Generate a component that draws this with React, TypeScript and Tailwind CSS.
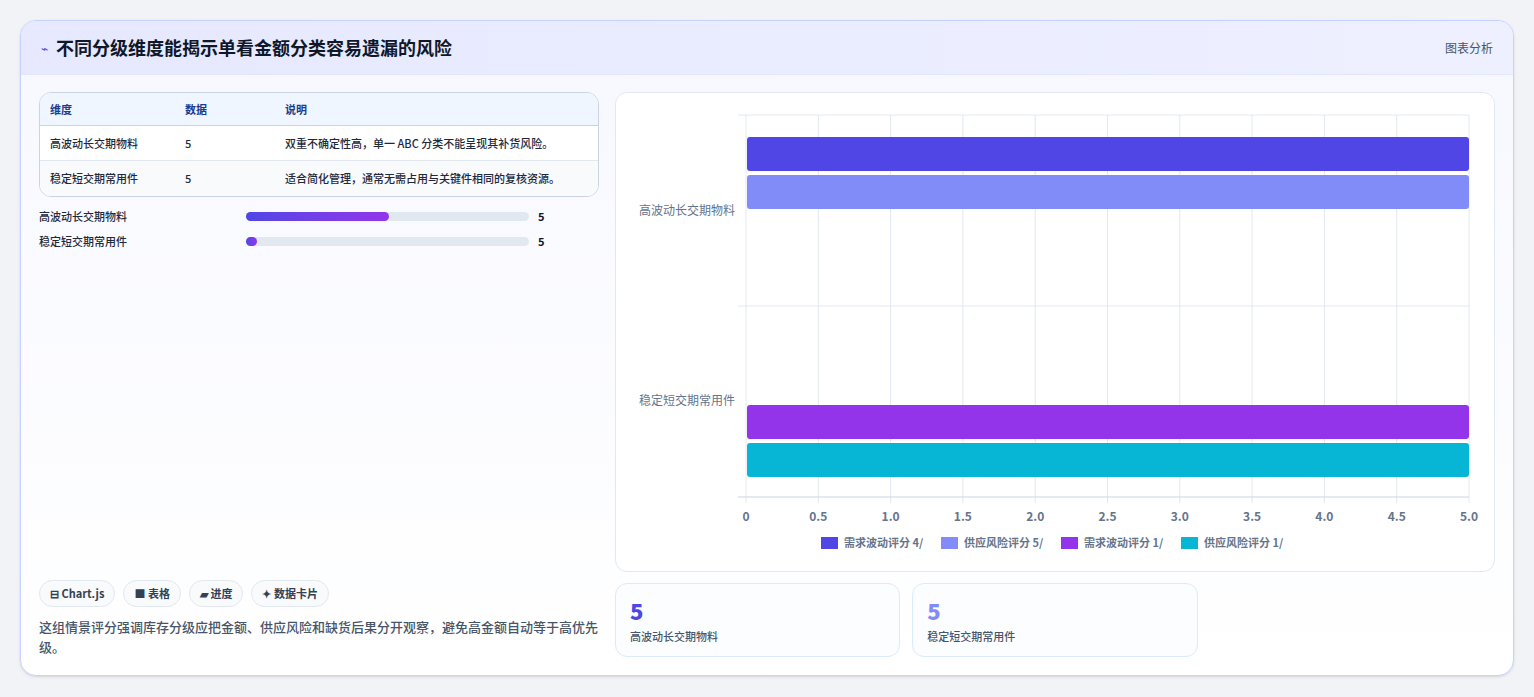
import React from "react";

const F = { fontFamily: '"Noto Sans CJK SC","Noto Sans",sans-serif' };

function Chart() {
  const x0 = 130, x1 = 853, y0 = 22, y1 = 404;
  const sx = (v: number) => x0 + ((x1 - x0) * v) / 5;
  const ticks = [0, 0.5, 1, 1.5, 2, 2.5, 3, 3.5, 4, 4.5, 5];
  const bars = [
    { y: 44, c: "#4f46e5" },
    { y: 82, c: "#818cf8" },
    { y: 312, c: "#9333ea" },
    { y: 350, c: "#06b6d4" },
  ];
  const legend = [
    { c: "#4f46e5", t: "需求波动评分 4/" },
    { c: "#818cf8", t: "供应风险评分 5/" },
    { c: "#9333ea", t: "需求波动评分 1/" },
    { c: "#06b6d4", t: "供应风险评分 1/" },
  ];
  let lx = 205;
  return (
    <svg width="878" height="479" style={F}>
      {ticks.map((t) => (
        <line key={t} x1={sx(t)} x2={sx(t)} y1={y0} y2={y1 + 6} stroke="#e2e8f0" />
      ))}
      {[y0, 213, y1].map((y) => (
        <line key={y} x1={x0 - 8} x2={x1} y1={y} y2={y} stroke={y === y1 ? "#cbd5e1" : "#e2e8f0"} />
      ))}
      {bars.map((b) => (
        <rect key={b.y} x={x0 + 1} y={b.y} width={x1 - x0 - 1} height={34} rx={3} fill={b.c} />
      ))}
      <text x={119} y={122} textAnchor="end" fontSize="12" fill="#64748b">高波动长交期物料</text>
      <text x={119} y={312} textAnchor="end" fontSize="12" fill="#64748b">稳定短交期常用件</text>
      {ticks.map((t) => (
        <text key={t} x={sx(t)} y={428} textAnchor="middle" fontSize="12" fontWeight="700" fill="#64748b">
          {t === 0 ? "0" : t.toFixed(1)}
        </text>
      ))}
      {legend.map((l) => {
        const x = lx;
        lx += 120;
        return (
          <g key={l.t}>
            <rect x={x} y={444} width={17} height={12} fill={l.c} />
            <text x={x + 23} y={454} fontSize="11" fontWeight="700" fill="#64748b">{l.t}</text>
          </g>
        );
      })}
    </svg>
  );
}

export default function App() {
  return (
    <div className="min-h-[697px] bg-[#f1f3f7] pt-5 px-5" style={F}>
      <div className="w-[1494px] h-[656px] rounded-2xl border border-[#c7d2fe] bg-gradient-to-b from-[#f7f8ff] to-white shadow-sm overflow-hidden flex flex-col">
        <div className="h-[55px] flex items-center justify-between px-5 bg-gradient-to-r from-[#e6e9ff] to-[#eef0ff] border-b border-[#e0e7ff]">
          <div className="flex items-center gap-2">
            <span className="text-[#4f46e5] text-xs">⌁</span>
            <span className="text-[18px] font-bold text-[#0f172a]">不同分级维度能揭示单看金额分类容易遗漏的风险</span>
          </div>
          <span className="text-[12px] text-[#475569]">图表分析</span>
        </div>
        <div className="flex-1 flex gap-4 px-[18px] pt-[17px] pb-[18px]">
          <div className="w-[562px] flex flex-col">
            <div className="rounded-xl border border-[#cbd5e1] overflow-hidden bg-white text-[11px]">
              <div className="flex h-[33px] items-center bg-[#eff6ff] border-b border-[#cbd5e1] font-bold text-[#1e3a8a]">
                <div className="w-[145px] pl-[10px]">维度</div>
                <div className="w-[100px]">数据</div>
                <div>说明</div>
              </div>
              {[
                ["高波动长交期物料", "双重不确定性高，单一 ABC 分类不能呈现其补货风险。"],
                ["稳定短交期常用件", "适合简化管理，通常无需占用与关键件相同的复核资源。"],
              ].map((r, i) => (
                <div key={i} className={`flex h-[35px] items-center text-[#1e293b] font-medium ${i === 0 ? "border-b border-[#e2e8f0]" : "bg-[#f8fafc]"}`}>
                  <div className="w-[145px] pl-[10px]">{r[0]}</div>
                  <div className="w-[100px]">5</div>
                  <div>{r[1]}</div>
                </div>
              ))}
            </div>
            <div className="mt-3 flex flex-col gap-[11px] text-[11px] font-medium text-[#1e293b]">
              {[
                ["高波动长交期物料", "w-[143px]"],
                ["稳定短交期常用件", "w-[11px]"],
              ].map((r) => (
                <div key={r[0]} className="flex items-center h-[14px]">
                  <div className="w-[207px]">{r[0]}</div>
                  <div className="w-[283px] h-[9px] rounded-full bg-[#e2e8f0]">
                    <div className={`${r[1]} h-[9px] rounded-full bg-gradient-to-r from-[#4f46e5] to-[#9333ea]`} />
                  </div>
                  <div className="ml-[9px] font-bold text-[#0f172a]">5</div>
                </div>
              ))}
            </div>
            <div className="mt-auto">
              <div className="flex gap-2 text-[11px] font-bold text-[#334155]">
                {["⊟ Chart.js", "■ 表格", "▰ 进度", "✦ 数据卡片"].map((c) => (
                  <span key={c} className="h-[27px] px-[10px] flex items-center rounded-full border border-[#e2e8f0] bg-[#f8fafc]">{c}</span>
                ))}
              </div>
              <p className="mt-[10px] text-[13px] leading-[20px] font-medium text-[#475569]">
                这组情景评分强调库存分级应把金额、供应风险和缺货后果分开观察，避免高金额自动等于高优先级。
              </p>
            </div>
          </div>
          <div className="flex-1 flex flex-col gap-[11px]">
            <div className="h-[480px] rounded-xl border border-[#e2e8f0] bg-white overflow-hidden">
              <Chart />
            </div>
            <div className="grid grid-cols-3 gap-[12px]">
              {[
                ["text-[#4f46e5]", "高波动长交期物料"],
                ["text-[#818cf8]", "稳定短交期常用件"],
              ].map((c) => (
                <div key={c[1]} className="h-[74px] rounded-xl border border-[#dbeafe] bg-[#fbfdff] px-[14px] pt-[12px]">
                  <div className={`text-[22px] font-black leading-[28px] ${c[0]}`}>5</div>
                  <div className="mt-[4px] text-[11px] text-[#475569] font-medium">{c[1]}</div>
                </div>
              ))}
            </div>
          </div>
        </div>
      </div>
    </div>
  );
}
